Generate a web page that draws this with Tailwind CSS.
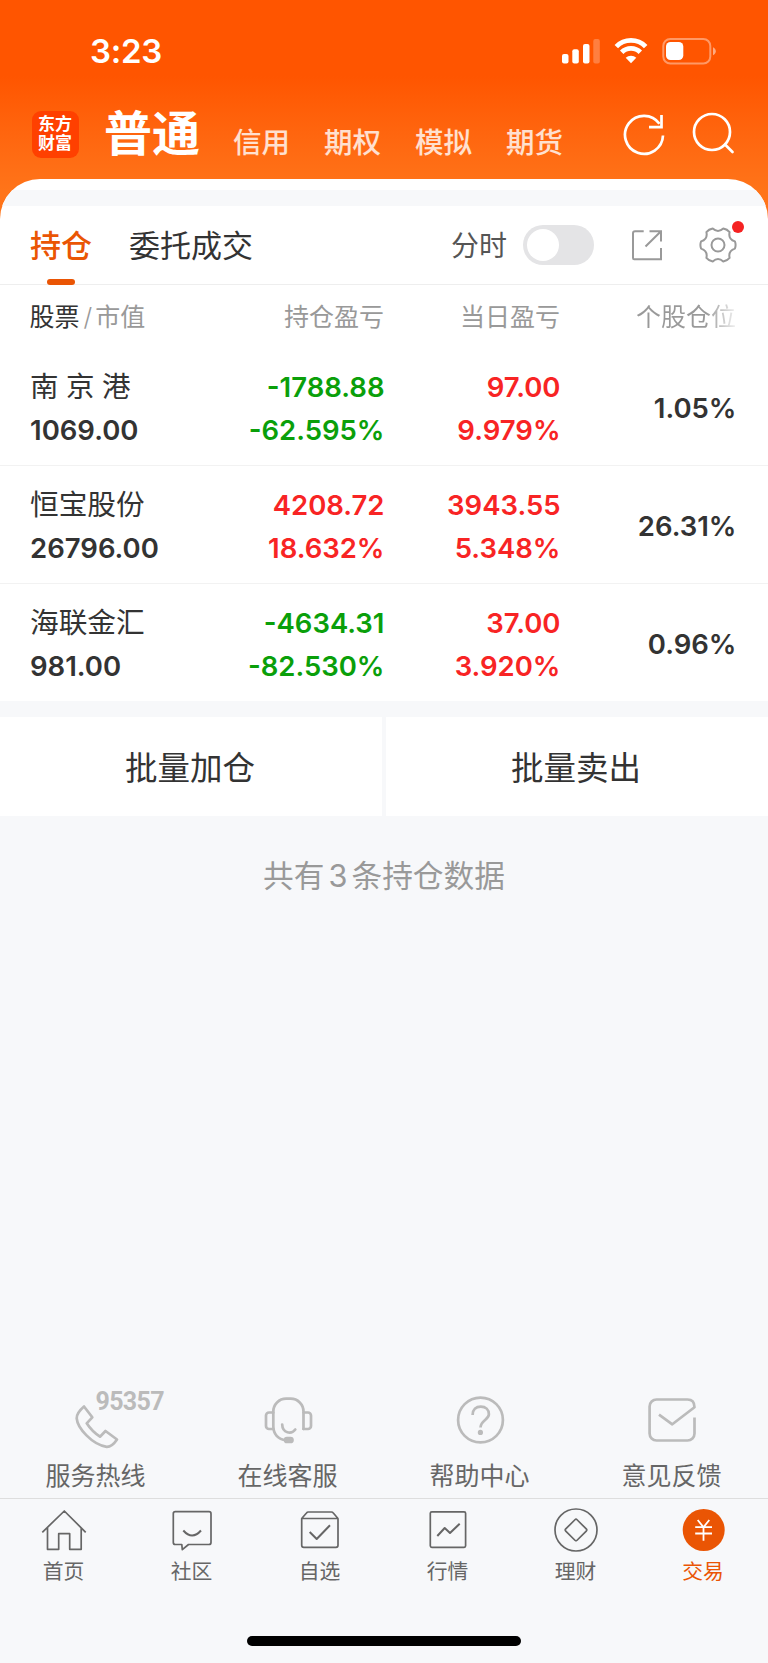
<!DOCTYPE html>
<html lang="zh-CN">
<head>
    <meta charset="UTF-8">
    <meta name="viewport" content="width=device-width, initial-scale=1.0">
    <title>持仓</title>
    <script src="https://cdn.jsdelivr.net/npm/@tailwindcss/browser@4"></script>
</head>
<body class="bg-[#f7f8fa] text-[#333] font-['Inter','Noto_Sans_CJK_SC',sans-serif]">
    <div class="w-[768px] h-[1663px] flex flex-col overflow-hidden whitespace-nowrap">

        <!-- header -->
        <header class="h-[224px] shrink-0 text-white bg-linear-to-b from-[#ff5500] from-34% to-[#ff7419] to-85%">
            <div class="h-[110px] pt-[31px] pl-[90px] pr-[50px] flex justify-between">
                <div class="text-[33px] leading-[41px] font-semibold tracking-[-0.3px]">3:23</div>
                <svg class="w-[158px] h-[41px]" viewBox="0 0 158 41" fill="white">
                    <rect x="2" y="23" width="6.5" height="9.5" rx="2"/>
                    <rect x="12.3" y="18.3" width="6.5" height="14.2" rx="2"/>
                    <rect x="23" y="13" width="6.5" height="19.5" rx="2"/>
                    <rect x="33.3" y="8" width="6.5" height="24.5" rx="2" opacity="0.25"/>
                    <g fill="none" stroke="white" stroke-width="4.8">
                        <path d="M56.3 15.6A20.5 20.5 0 0 1 85.7 15.6"/>
                        <path d="M61.7 21.2A13 13 0 0 1 80.3 21.2"/>
                    </g>
                    <path d="M71 32.2l-5.3-5.4a7.6 7.6 0 0 1 10.6 0z"/>
                    <rect x="103.3" y="8" width="47" height="24.5" rx="7" fill="none" stroke="white" stroke-opacity="0.4" stroke-width="2"/>
                    <rect x="106" y="11" width="17.3" height="18" rx="4.5"/>
                    <path d="M153 16.2c1.8.8 2.8 2.3 2.8 4s-1 3.2-2.8 4z" opacity="0.5"/>
                </svg>
            </div>
            <div class="h-12 flex items-center pl-[31.5px] pr-[32px]">
                <div class="size-[47px] rounded-[9px] bg-[#ff4000] flex flex-col items-center justify-center text-[17px] leading-[19.5px] font-bold">
                    <span>东方</span>
                    <span>财富</span>
                </div>
                <div class="ml-[25.5px] text-[48px] leading-[48px] font-bold">普通</div>
                <nav class="ml-[33px] mt-[17px] flex gap-[34px] text-[28.5px] leading-[34px] font-medium text-white/80">
                    <span>信用</span>
                    <span>期权</span>
                    <span>模拟</span>
                    <span>期货</span>
                </nav>
                <div class="ml-auto flex gap-[23px]">
                    <svg class="size-[46px]" viewBox="0 0 46 46" fill="none" stroke="white" stroke-width="2.7">
                        <path d="M42 24.5A19 19 0 1 1 38.5 12.8"/>
                        <path d="M40.5 4v12.2H28"/>
                    </svg>
                    <svg class="size-[46px]" viewBox="0 0 46 46" fill="none" stroke="white" stroke-width="2.7" stroke-linecap="round">
                        <circle cx="22" cy="21" r="18"/>
                        <path d="M35 33.5l7.5 7.5"/>
                    </svg>
                </div>
            </div>
        </header>

        <!-- holdings -->
        <main class="-mt-[45px] rounded-t-[40px] overflow-hidden bg-white">
            <div class="h-4 mt-[11px] bg-[#f7f8fa]"></div>
            <div class="h-[79px] flex items-center border-b border-[#eee] pl-[30px] pr-[31px] text-[31px]">
                <div class="relative h-full flex items-center pt-[2px] font-medium text-[#ea5504]">
                    持仓
                    <span class="absolute -bottom-px left-[17px] w-7 h-[6px] rounded-[3px] bg-[#ea5504]"></span>
                </div>
                <div class="ml-[37px] pt-[2px]">委托成交</div>
                <div class="ml-auto pt-[2px] text-[28px] text-[#555]">分时</div>
                <div class="ml-[16px] w-[71px] h-10 rounded-full bg-[#e4e4e6] flex items-center pl-1">
                    <span class="size-8 rounded-full bg-white"></span>
                </div>
                <svg class="ml-[37px] size-8" viewBox="0 0 32 32" fill="none" stroke="#999" stroke-width="2">
                    <path d="M12.7 2.3H4a2 2 0 0 0-2 2V29a1.2 1.2 0 0 0 1.2 1.2H30V19"/>
                    <path d="M18.5 2.3H30V12.5M30 2.3L14.5 17.5"/>
                </svg>
                <div class="relative ml-[36px]">
                    <svg class="size-[38px]" viewBox="-19 -19 38 38" fill="none" stroke="#999" stroke-width="2" stroke-linejoin="round">
                        <path d="M16.900 3.600Q10 5.800 11.600 12.900Q9.200 15.800 5.300 16.500Q0 11.600-5.300 16.500Q-9.200 15.800-11.600 12.900Q-10 5.800-16.900 3.600Q-18.300 0-16.900-3.600Q-10-5.800-11.600-12.900Q-9.200-15.800-5.300-16.500Q0-11.600 5.300-16.500Q9.200-15.800 11.600-12.900Q10-5.800 16.900-3.600Q18.300 0 16.900 3.600z"/>
                        <circle r="6.5"/>
                    </svg>
                    <span class="absolute -top-[5px] -right-[7px] size-3 rounded-full bg-[#f52222]"></span>
                </div>
            </div>

            <div class="h-[63px] grid grid-cols-[177px_177.5px_176px_176px] items-center pt-[2px] pl-[29.5px] text-[25px] text-[#999] text-right">
                <div class="text-left"><span class="text-[#333]">股票</span><span class="pl-[4px] pr-[3px] font-light">/</span>市值</div>
                <div>持仓盈亏</div>
                <div>当日盈亏</div>
                <div><span class="bg-linear-to-r from-[#999] from-70% to-[#999]/15 bg-clip-text text-transparent">个股仓位</span></div>
            </div>

            <div class="h-[118px] grid grid-cols-[177px_177.500px_176px_176px] items-center border-b border-[#f2f2f2] pt-[4px] pl-[30px] text-[27.500px] leading-[42.500px] font-semibold text-right">
                <div class="text-left"><div class="font-normal text-[28.500px] [word-spacing:-0.500px]">南 京 港</div><div>1069.00</div></div>
                <div class="text-[#0a9f0a]"><div>-1788.88</div><div>-62.595%</div></div>
                <div class="text-[#f82424]"><div>97.00</div><div>9.979%</div></div>
                <div class="pb-px">1.05%</div>
            </div>
            <div class="h-[118px] grid grid-cols-[177px_177.500px_176px_176px] items-center border-b border-[#f2f2f2] pt-[4px] pl-[30px] text-[27.500px] leading-[42.500px] font-semibold text-right">
                <div class="text-left"><div class="font-normal text-[28.700px]">恒宝股份</div><div>26796.00</div></div>
                <div class="text-[#f82424]"><div>4208.72</div><div>18.632%</div></div>
                <div class="text-[#f82424]"><div>3943.55</div><div>5.348%</div></div>
                <div class="pb-px">26.31%</div>
            </div>
            <div class="h-[117px] grid grid-cols-[177px_177.500px_176px_176px] items-center pt-[4px] pl-[30px] text-[27.500px] leading-[42.500px] font-semibold text-right">
                <div class="text-left"><div class="font-normal text-[28.700px]">海联金汇</div><div>981.00</div></div>
                <div class="text-[#0a9f0a]"><div>-4634.31</div><div>-82.530%</div></div>
                <div class="text-[#f82424]"><div>37.00</div><div>3.920%</div></div>
                <div class="pb-px">0.96%</div>
            </div>
        </main>

        <div class="mt-4 h-[99px] shrink-0 grid grid-cols-2 gap-1 text-[32.500px]">
            <div class="bg-white flex items-center justify-center pt-[5px] pr-[2px]">批量加仓</div>
            <div class="bg-white flex items-center justify-center pt-[5px] pr-[2px]">批量卖出</div>
        </div>
        <p class="mt-[39px] text-center text-[30.700px] leading-[42px] text-[#999]">共有<span class="px-[4px]">3</span>条持仓数据</p>

        <!-- service links -->
        <div class="mt-auto grid grid-cols-4 text-[25px] leading-[36px] text-[#666]">
            <div class="flex flex-col items-center">
                <svg class="w-[100px] h-[68px] overflow-visible" viewBox="0 0 100 68" fill="none" stroke="#bbb" stroke-width="2.7" stroke-linejoin="round">
                    <path d="M38 16.5L46.3 27.3L40.7 33.3Q46 41.5 54 46.7L59.5 41L71 49.5Q66 57 60.7 56.8C46 54.5 31.5 38 30.7 28.3Q30.5 23 38 16.5z"/>
                    <text x="49.5" y="20.3" textLength="69" font-size="25" font-weight="700" font-family="Roboto" fill="#bbb" stroke="none">95357</text>
                </svg>
                <span class="pr-px">服务热线</span>
            </div>
            <div class="flex flex-col items-center">
                <svg class="w-[100px] h-[68px]" viewBox="0 0 100 68" fill="none" stroke="#bbb" stroke-width="2.7" stroke-linecap="round" stroke-linejoin="round">
                    <path d="M65.5 39V21.5A12.8 12.8 0 0 0 52.7 8.7H48.1A12.8 12.8 0 0 0 35.3 21.5V36C35.3 44 40 49.5 48 50"/>
                    <path d="M35.3 22.5H31a3 3 0 0 0-3 3V36a3 3 0 0 0 3 3h4.3M65.5 22.5H70a3 3 0 0 1 3 3V36a3 3 0 0 1-3 3h-4.5"/>
                    <path d="M44.2 34.5C44.5 43.5 53.5 44.5 57.3 39.5"/>
                    <rect x="47" y="48" width="7.5" height="4" rx="2" fill="#bbb"/>
                </svg>
                <span class="pr-px">在线客服</span>
            </div>
            <div class="flex flex-col items-center">
                <svg class="w-[100px] h-[68px]" viewBox="0 0 100 68" fill="none" stroke="#bbb" stroke-width="2.7">
                    <circle cx="50.5" cy="30" r="22.4"/>
                    <path d="M42.6 25C42.6 19.5 46 16.7 50.8 16.7S58.9 19.8 58.9 24.2C58.9 29.8 50.5 30.3 50.5 37.5"/>
                    <circle cx="50.4" cy="42.4" r="2.6" fill="#bbb" stroke="none"/>
                </svg>
                <span class="pr-px">帮助中心</span>
            </div>
            <div class="flex flex-col items-center">
                <svg class="w-[100px] h-[68px]" viewBox="0 0 100 68" fill="none" stroke="#bbb" stroke-width="2.7" stroke-linejoin="round">
                    <path d="M72.5 27.5V43.5a7 7 0 0 1-7 7H34.6a7 7 0 0 1-7-7V16.5a7 7 0 0 1 7-7H65.5C70 9.5 72.5 12.5 72.5 17.3L50.3 34.3L37 24.7"/>
                </svg>
                <span class="pr-px">意见反馈</span>
            </div>
        </div>

        <!-- tab bar -->
        <nav class="mt-[4px] h-[165px] shrink-0 border-t border-[#dedede] flex flex-col">
            <div class="pt-[7px] grid grid-cols-6 text-[20.8px] leading-[30px] text-[#666]">
                <div class="flex flex-col items-center">
                    <svg class="size-12" viewBox="0 0 48 48" fill="none" stroke="currentColor" stroke-width="1.7" stroke-linejoin="round">
                        <path d="M2.3 26.3L24.3 5L45.7 26.3M7.5 21.7V43.3H18.7V27.7H29.7V43.3H41.2V21.7"/>
                    </svg>
                    <span class="mt-[3px] pr-px">首页</span>
                </div>
                <div class="flex flex-col items-center">
                    <svg class="size-12" viewBox="0 0 48 48" fill="none" stroke="currentColor" stroke-width="1.7" stroke-linejoin="round">
                        <path d="M7.3 5.7H41a2 2 0 0 1 2 2V36.5a2 2 0 0 1-2 2H20.5L14.3 43.7L13.8 38.5H7.3a2 2 0 0 1-2-2V7.7a2 2 0 0 1 2-2z"/>
                        <path d="M15.3 24.5Q24.2 34.5 33 24.5" stroke-width="2"/>
                    </svg>
                    <span class="mt-[3px] pr-px">社区</span>
                </div>
                <div class="flex flex-col items-center">
                    <svg class="size-12" viewBox="0 0 48 48" fill="none" stroke="currentColor" stroke-width="1.7" stroke-linejoin="round">
                        <path d="M5.7 12.5H42V39.3a2 2 0 0 1-2 2H7.7a2 2 0 0 1-2-2zL10.5 7Q11.2 6 12.3 6H35.4Q36.5 6 37.3 7L42 12.5"/>
                        <path d="M13.7 26l7 7L34 19.3" stroke-width="2"/>
                    </svg>
                    <span class="mt-[3px] pr-px">自选</span>
                </div>
                <div class="flex flex-col items-center">
                    <svg class="size-12" viewBox="0 0 48 48" fill="none" stroke="currentColor" stroke-width="1.7" stroke-linejoin="round">
                        <rect x="6.3" y="5.8" width="35.3" height="35.5" rx="1.5"/>
                        <path d="M13.3 30L20.7 22L26 27L35.7 17.7" stroke-width="2"/>
                    </svg>
                    <span class="mt-[3px] pr-px">行情</span>
                </div>
                <div class="flex flex-col items-center">
                    <svg class="size-12" viewBox="0 0 48 48" fill="none" stroke="currentColor" stroke-width="1.7" stroke-linejoin="round">
                        <circle cx="24" cy="24" r="21"/>
                        <rect x="16" y="16" width="16" height="16" rx="1.5" transform="rotate(45 24 24)"/>
                    </svg>
                    <span class="mt-[3px] pr-px">理财</span>
                </div>
                <div class="flex flex-col items-center text-[#ea5504]">
                    <svg class="size-12" viewBox="0 0 48 48" fill="none" stroke="white" stroke-width="1.8">
                        <circle cx="23.7" cy="24" r="21" fill="#ea5504" stroke="none"/>
                        <path d="M17.7 14L23.5 21.2L29.3 14M15.2 21.2H32M15.2 27.5H32M23.5 21V34.7"/>
                    </svg>
                    <span class="mt-[3px] pr-[2px]">交易</span>
                </div>
            </div>
            <div class="mt-auto mb-[17px] mx-auto w-[274px] h-[10px] rounded-full bg-black"></div>
        </nav>
    </div>
</body>
</html>
